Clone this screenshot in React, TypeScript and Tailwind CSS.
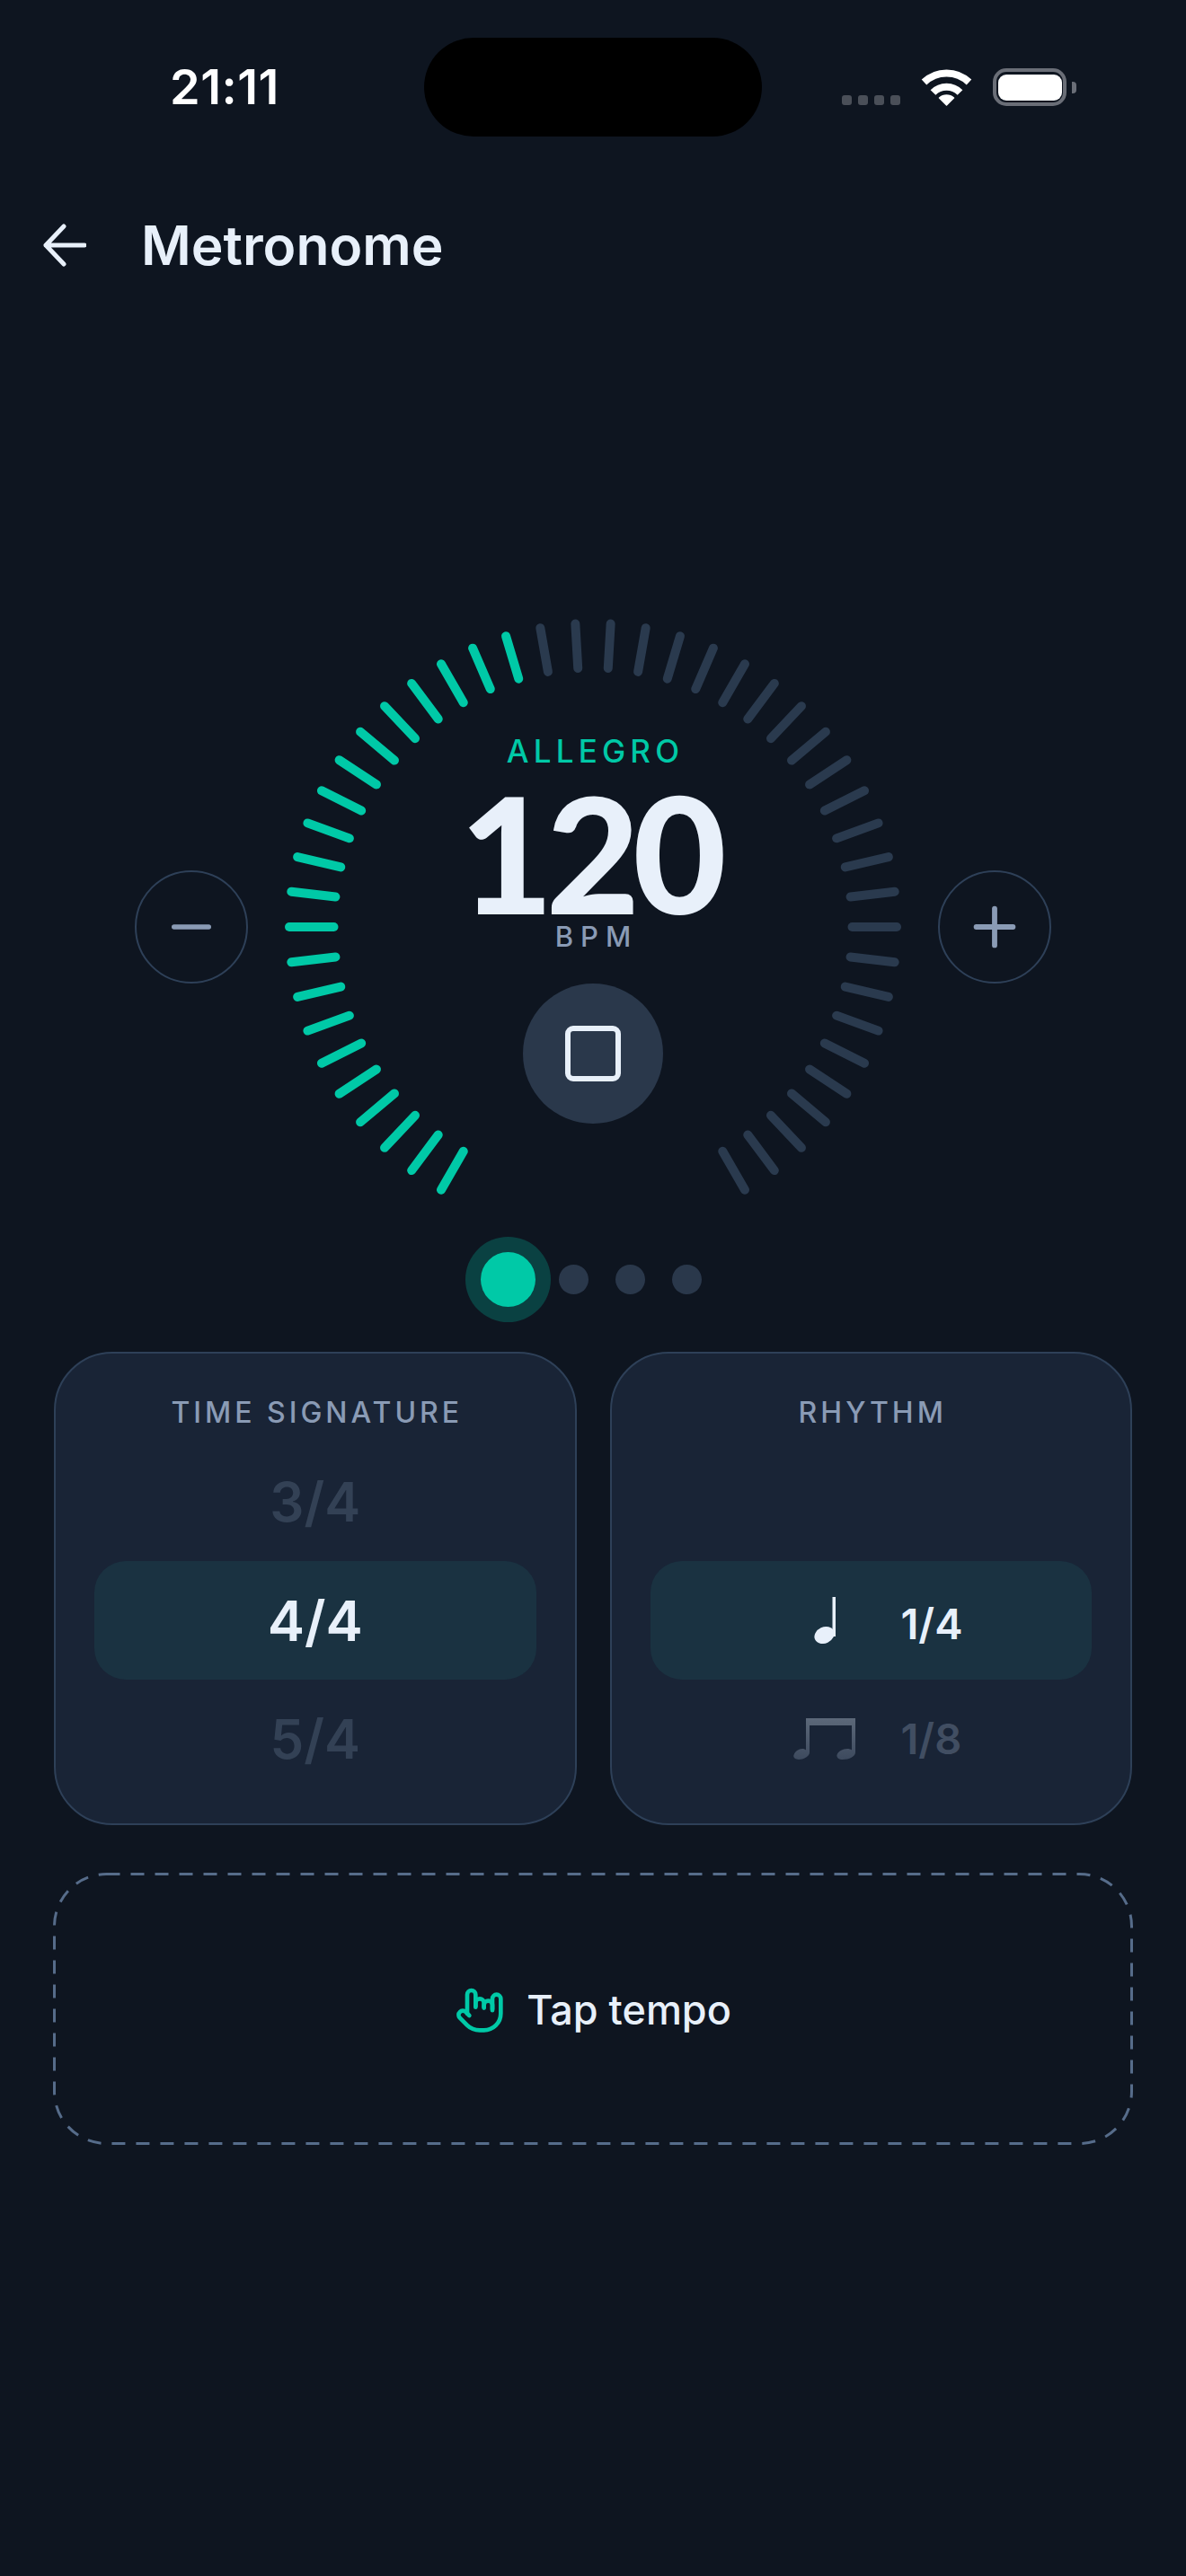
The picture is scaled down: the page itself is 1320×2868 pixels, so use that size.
import { HandMetal, Minus, Plus } from 'lucide-react'

const TICK_COUNT = 46
const ACTIVE_TICKS = 21

// Dial ticks, sweep of 300 degrees starting bottom left
const ticks = Array.from({ length: TICK_COUNT }, (_, i) => {
  const angle = ((-150 + (i * 300) / (TICK_COUNT - 1)) * Math.PI) / 180
  const sin = Math.sin(angle)
  const cos = Math.cos(angle)
  return {
    x1: 343 + sin * 288.5,
    y1: 343 - cos * 288.5,
    x2: 343 + sin * 338,
    y2: 343 - cos * 338,
    active: i < ACTIVE_TICKS,
  }
})

function StatusBar() {
  return (
    <div className="flex h-[110px] items-center mt-[42px]">
      <span className="ml-[189px] w-[283px] font-semibold text-[54px] leading-none tracking-[0.5px] text-white">21:11</span>
      <div className="h-[110px] w-[376px] rounded-full bg-black" />
      <div className="ml-[89px] flex items-end gap-[7px] h-[42px] pb-[1px]">
        <span className="h-[11px] w-[11px] rounded-[3px] bg-[#4a4f58]" />
        <span className="h-[11px] w-[11px] rounded-[3px] bg-[#4a4f58]" />
        <span className="h-[11px] w-[11px] rounded-[3px] bg-[#4a4f58]" />
        <span className="h-[11px] w-[11px] rounded-[3px] bg-[#4a4f58]" />
      </div>
      <svg className="ml-[23px]" width="57" height="42" viewBox="0 0 57 42">
        <path d="M3.5 15.5A36 36 0 0 1 53.5 15.5" fill="none" stroke="#fff" strokeWidth="8" />
        <path d="M13.5 27A21 21 0 0 1 43.5 27" fill="none" stroke="#fff" strokeWidth="8" />
        <path d="M28.5 41L20.5 33A12 12 0 0 1 36.5 33Z" fill="#fff" stroke="#fff" strokeWidth="1.5" strokeLinejoin="round" />
      </svg>
      <div className="ml-[23px] flex h-[42px] w-[82px] items-center justify-center rounded-[15px] border-[4px] border-[#6a6e77]">
        <div className="h-[29px] w-[71px] rounded-[9px] bg-white" />
      </div>
      <div className="ml-[6px] h-[13px] w-[5px] rounded-r-[4px] bg-[#6a6e77]" />
    </div>
  )
}

function StepButton({ children }: { children: React.ReactNode }) {
  return (
    <button className="flex h-[126px] w-[126px] shrink-0 items-center justify-center rounded-full border-[2.5px] border-[#2e4058] text-[#8a9bb5]">
      {children}
    </button>
  )
}

function Dial() {
  return (
    <div className="relative h-[686px] w-[686px] shrink-0">
      <svg className="absolute inset-0" width="686" height="686" viewBox="0 0 686 686">
        {ticks.map((t, i) => (
          <line
            key={i}
            x1={t.x1}
            y1={t.y1}
            x2={t.x2}
            y2={t.y2}
            stroke={t.active ? '#00c9a7' : '#2a3a4e'}
            strokeWidth="10"
            strokeLinecap="round"
          />
        ))}
      </svg>
      <div className="relative flex flex-col items-center pt-[125px]">
        <span className="text-[35px] leading-[44px] font-medium tracking-[5.2px] pl-[5px] text-[#00c9a7]">ALLEGRO</span>
        <span className="mt-[15px] font-['Lato',sans-serif] text-[180px] leading-[150px] font-black tracking-[-8px] pr-[8px] text-[#e8f0fa]">120</span>
        <span className="mt-[2px] text-[31px] leading-[36px] font-medium tracking-[8px] pl-[8px] text-[#8a9bb5]">BPM</span>
        <button className="mt-[34px] flex h-[156px] w-[156px] items-center justify-center rounded-full bg-[#2a384b]">
          <span className="h-[62px] w-[62px] rounded-[9px] border-[6px] border-[#e8f0fa]" />
        </button>
      </div>
    </div>
  )
}

function QuarterNote() {
  return (
    <svg width="24" height="52" viewBox="0 0 24 52" fill="#e8f0fa">
      <rect x="20.5" y="0" width="3.5" height="44" />
      <ellipse cx="11.5" cy="42.5" rx="11.5" ry="9" transform="rotate(-25 11.5 42.5)" />
    </svg>
  )
}

function EighthNotes() {
  return (
    <svg width="69" height="46" viewBox="0 0 69 46">
      <defs>
        <linearGradient id="beam" x1="0" y1="0" x2="0" y2="1">
          <stop offset="0" stopColor="#5c6879" />
          <stop offset="1" stopColor="#3d4a5e" />
        </linearGradient>
      </defs>
      <path
        fill="url(#beam)"
        d="M14 0H69V38C69 42.5 62 46 55 46C50 46 48 43.5 48.500 41C49.500 37 55 34 60 34C62 34 64 34.500 65 35.500V8H18V38C18 42.500 11 46 6 46C2 46 -0.500 43.500 0.500 41C1.500 37 6 34 10 34C12 34 13 34.500 14 35.500Z"
      />
    </svg>
  )
}

function TimeSignatureCard() {
  return (
    <div className="h-[527px] flex-1 rounded-[65px] border-[2.5px] border-[#2e4058] bg-[#192436] px-[43px] pt-[46px]">
      <div className="pl-[4px] text-center text-[32px] leading-[40px] font-medium tracking-[4px] text-[#8a9bb5]">TIME SIGNATURE</div>
      <div className="mt-[13px] flex h-[132px] items-center justify-center text-[60px] font-semibold text-[#334155]">3/4</div>
      <div className="flex h-[132px] items-center justify-center rounded-[35px] bg-[#1a3241] text-[62px] font-semibold text-[#e8f0fa]">4/4</div>
      <div className="flex h-[132px] items-center justify-center text-[60px] font-semibold text-[#334155]">5/4</div>
    </div>
  )
}

function RhythmCard() {
  return (
    <div className="h-[527px] flex-1 rounded-[65px] border-[2.5px] border-[#2e4058] bg-[#192436] px-[43px] pt-[46px]">
      <div className="pl-[4px] text-center text-[32px] leading-[40px] font-medium tracking-[4px] text-[#8a9bb5]">RHYTHM</div>
      <div className="mt-[13px] h-[132px]" />
      <div className="relative flex h-[132px] items-center rounded-[35px] bg-[#1a3241] pl-[182px]">
        <QuarterNote />
        <span className="ml-[73px] mt-[8px] text-[47px] font-semibold text-[#e8f0fa]">1/4</span>
      </div>
      <div className="flex h-[132px] items-center pl-[159px]">
        <EighthNotes />
        <span className="ml-[51px] text-[47px] font-semibold text-[#414e62]">1/8</span>
      </div>
    </div>
  )
}

export default function App() {
  return (
    <div className="h-[2868px] w-[1320px] overflow-hidden bg-[#0e1520] font-['Inter',sans-serif]">
      <StatusBar />

      <header className="mt-[68px] flex h-[106px] items-center pl-[48px]">
        <svg width="48" height="48" viewBox="0 0 48 48" fill="none" stroke="#e8f0fa" strokeWidth="5" strokeLinecap="round" strokeLinejoin="round">
          <path d="M46 24H3M23 3L3 24L23 45" />
        </svg>
        <h1 className="ml-[61px] text-[60.500px] leading-none font-semibold text-[#e8f0fa]">Metronome</h1>
      </header>

      <div className="mt-[363px] flex items-center pl-[150px] gap-[41px]">
        <StepButton>
          <Minus size={66} strokeWidth={2} />
        </StepButton>
        <Dial />
        <StepButton>
          <Plus size={70} strokeWidth={2} />
        </StepButton>
      </div>

      <div className="mt-[19px] flex items-center pl-[535px]">
        <span className="h-[61px] w-[61px] rounded-full bg-[#00c9a7] shadow-[0_0_0_17px_rgba(0,201,167,0.25)]" />
        <span className="ml-[26px] h-[33px] w-[33px] rounded-full bg-[#2a384b]" />
        <span className="ml-[30px] h-[33px] w-[33px] rounded-full bg-[#2a384b]" />
        <span className="ml-[30px] h-[33px] w-[33px] rounded-full bg-[#2a384b]" />
      </div>

      <div className="mt-[50px] flex gap-[37px] px-[60px]">
        <TimeSignatureCard />
        <RhythmCard />
      </div>

      <button className="relative mx-[59px] mt-[53px] flex h-[303px] w-[1202px] items-center justify-center gap-[24px]">
        {/* css dashes come out too short, so the outline is drawn */}
        <svg className="absolute inset-0" width="1202" height="303" fill="none">
          <rect x="1.500" y="1.500" width="1199" height="300" rx="58" stroke="#566c8a" strokeWidth="3" strokeDasharray="15 12" />
        </svg>
        <HandMetal size={56} strokeWidth={2} className="text-[#00c9a7]" />
        <span className="mt-[2px] text-[45px] font-medium text-[#e8f0fa]">Tap tempo</span>
      </button>
    </div>
  )
}
